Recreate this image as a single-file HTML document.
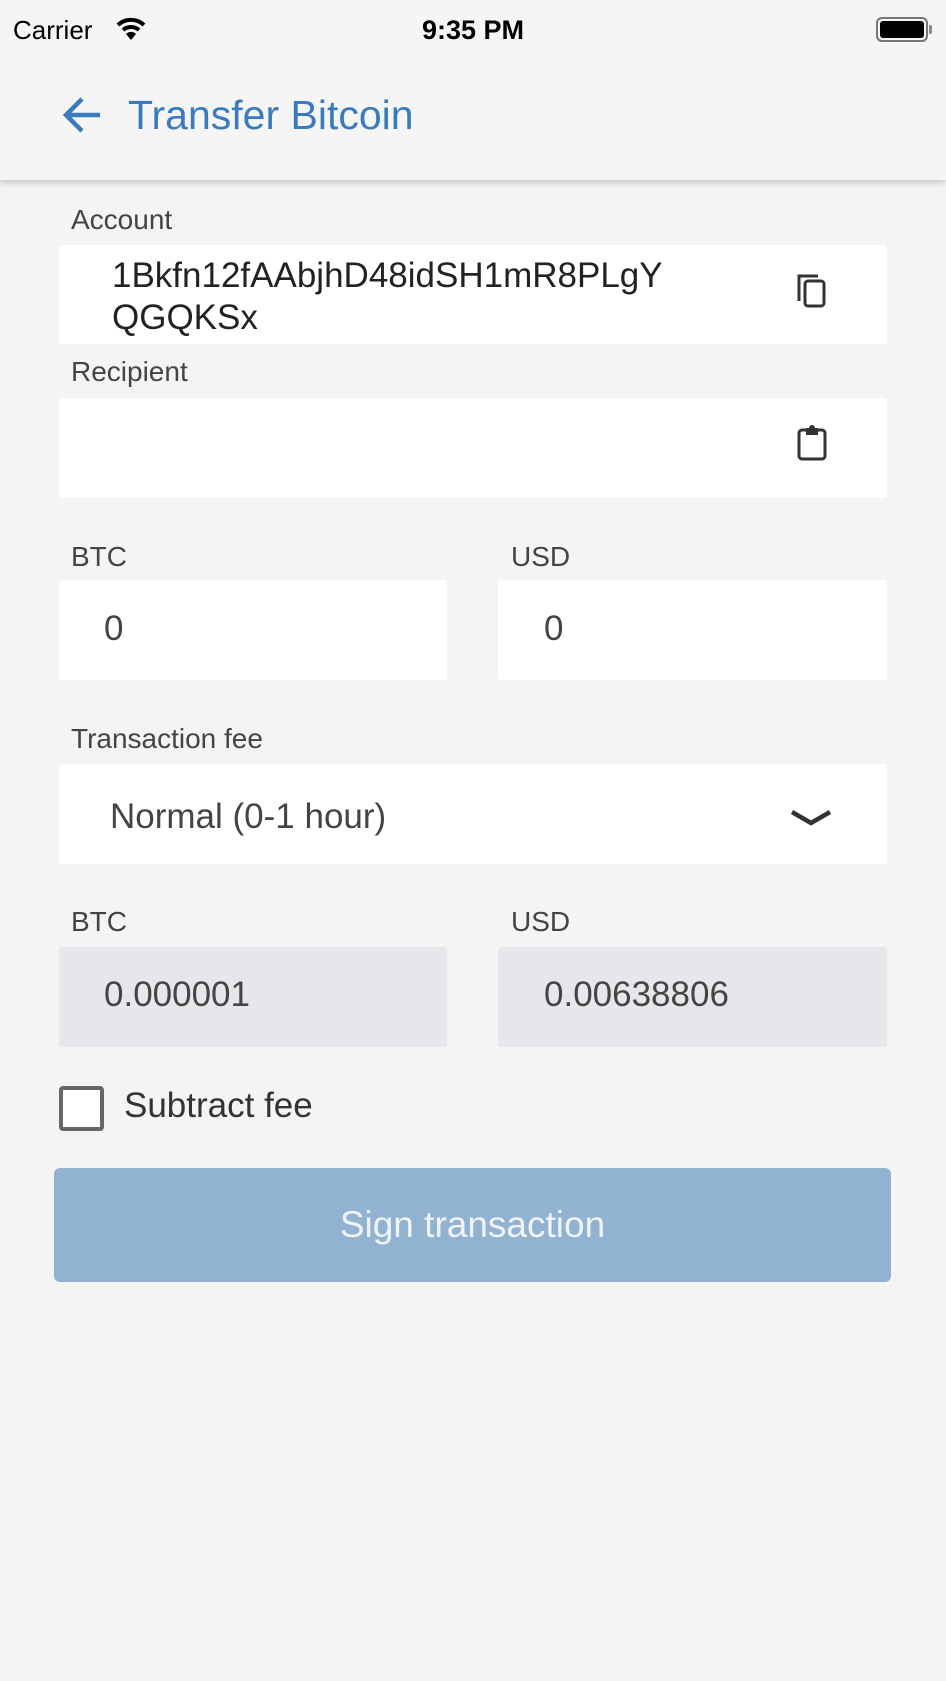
<!DOCTYPE html>
<html><head><style>
*{margin:0;padding:0;box-sizing:border-box}
body{width:946px;height:1681px;background:#f4f4f4;font-family:"Liberation Sans",sans-serif;position:relative;overflow:hidden;color:#333}
.a{position:absolute}
.hdr{left:0;top:0;width:946px;height:180px;background:#f5f5f5;box-shadow:0 3px 6px rgba(0,0,0,.18)}
.lbl{font-size:28px;color:#444;font-weight:300}
.fld{background:#fff;border-radius:3px}
.gray{background:#e6e7ea;border-radius:3px}
.val{font-size:35px;color:#444}
</style></head><body>
<div class="a hdr"></div>
<div class="a" style="left:13px;top:15px;font-size:26px;color:#000">Carrier</div>
<svg class="a" style="left:116px;top:16px" width="30" height="26" viewBox="0 0 30 26"><path d="M2 9 A19 19 0 0 1 28 9" stroke="#000" stroke-width="4" fill="none"/><path d="M7 14 A12 12 0 0 1 23 14" stroke="#000" stroke-width="4" fill="none"/><path d="M15 24 L10 18 A7 7 0 0 1 20 18 Z" fill="#000"/></svg>
<div class="a" style="left:0;width:946px;text-align:center;top:15px;font-size:27px;font-weight:bold;color:#000">9:35 PM</div>
<div class="a" style="left:876px;top:17px;width:52px;height:25px;border:2px solid #777;border-radius:6px;padding:2px"><div style="width:100%;height:100%;background:#000;border-radius:3px"></div></div>
<div class="a" style="left:929px;top:25px;width:3px;height:9px;background:#888;border-radius:0 2px 2px 0"></div>
<svg class="a" style="left:62px;top:96px" width="40" height="38" viewBox="0 0 40 38"><path d="M38 19 H5 M20 3 L4 19 L20 35" stroke="#3a7bbf" stroke-width="4.5" fill="none"/></svg>
<div class="a" style="left:128px;top:92px;font-size:41px;color:#3a7bbf">Transfer Bitcoin</div>

<div class="a lbl" style="left:71px;top:204px">Account</div>
<div class="a fld" style="left:59px;top:245px;width:828px;height:99px"></div>
<div class="a" style="left:112px;top:255px;font-size:35px;color:#222;line-height:42px">1Bkfn12fAAbjhD48idSH1mR8PLgY<br>QGQKSx</div>
<svg class="a" style="left:796px;top:273px" width="32" height="36" viewBox="0 0 32 36"><path d="M3 28 V3 H22" stroke="#333" stroke-width="3" fill="none"/><rect x="9" y="8" width="19" height="25" rx="3" stroke="#333" stroke-width="3" fill="none"/></svg>

<div class="a lbl" style="left:71px;top:356px">Recipient</div>
<div class="a fld" style="left:59px;top:398px;width:828px;height:100px"></div>
<svg class="a" style="left:797px;top:425px" width="30" height="36" viewBox="0 0 30 36"><rect x="2" y="5" width="26" height="29" rx="3" stroke="#333" stroke-width="3" fill="none"/><rect x="9" y="3" width="12" height="7" fill="#333"/><circle cx="15" cy="3" r="3" fill="#333"/></svg>

<div class="a lbl" style="left:71px;top:541px">BTC</div>
<div class="a lbl" style="left:511px;top:541px">USD</div>
<div class="a fld" style="left:59px;top:580px;width:388px;height:100px"></div>
<div class="a fld" style="left:498px;top:580px;width:389px;height:100px"></div>
<div class="a val" style="left:104px;top:609px">0</div>
<div class="a val" style="left:544px;top:609px">0</div>

<div class="a lbl" style="left:71px;top:723px">Transaction fee</div>
<div class="a fld" style="left:59px;top:764px;width:828px;height:100px"></div>
<div class="a val" style="left:110px;top:797px">Normal (0-1 hour)</div>
<svg class="a" style="left:789px;top:808px" width="44" height="20" viewBox="0 0 44 20"><path d="M3 4 L22 15 L41 4" stroke="#333" stroke-width="4.5" fill="none"/></svg>

<div class="a lbl" style="left:71px;top:906px">BTC</div>
<div class="a lbl" style="left:511px;top:906px">USD</div>
<div class="a gray" style="left:59px;top:947px;width:388px;height:100px"></div>
<div class="a gray" style="left:498px;top:947px;width:389px;height:100px"></div>
<div class="a val" style="left:104px;top:975px">0.000001</div>
<div class="a val" style="left:544px;top:975px">0.00638806</div>

<div class="a" style="left:59px;top:1086px;width:45px;height:45px;border:4px solid #666;border-radius:4px;background:#fff"></div>
<div class="a val" style="left:124px;top:1086px;color:#333">Subtract fee</div>

<div class="a" style="left:54px;top:1168px;width:837px;height:114px;background:#92b2d2;border-radius:6px;color:#eef3f8;font-size:37px;font-weight:300;text-align:center;line-height:114px">Sign transaction</div>
</body></html>
